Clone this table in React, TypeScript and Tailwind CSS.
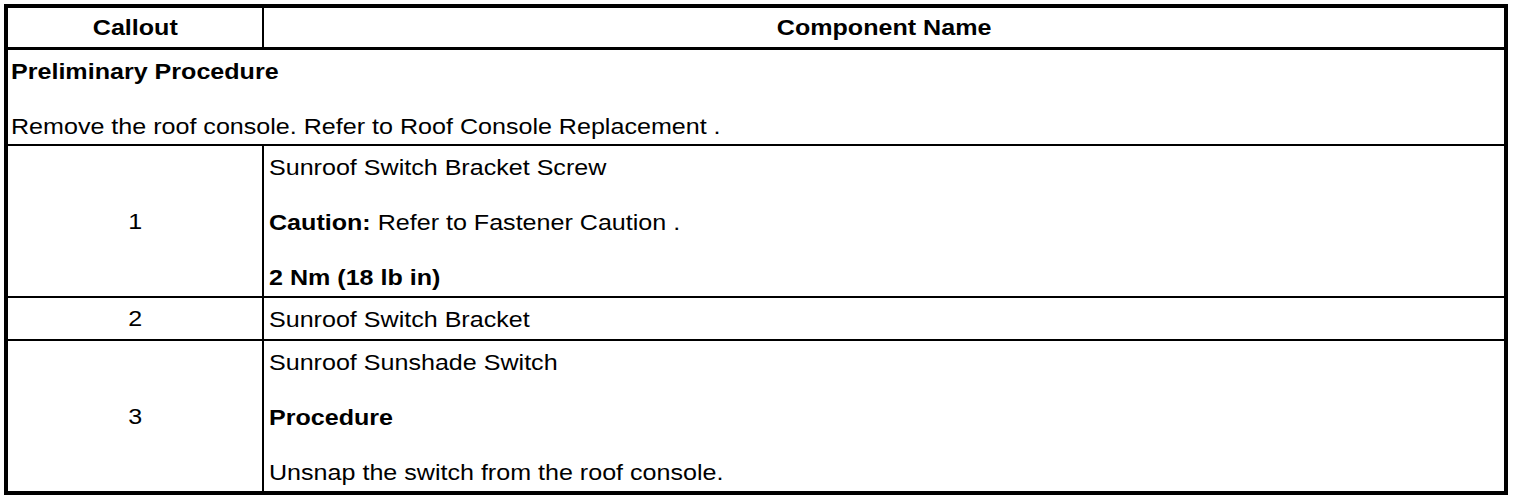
const font = "font-['Liberation_Sans',Arial,Helvetica,sans-serif]";

function Line({ children, bold }: { children: React.ReactNode; bold?: boolean }) {
  return (
    <div className="h-[24px] leading-[24px] whitespace-nowrap">
      <span className={`inline-block origin-left scale-x-[1.14] ${bold ? "font-bold" : ""}`}>
        {children}
      </span>
    </div>
  );
}

function Num({ children }: { children: React.ReactNode }) {
  return (
    <div className="w-[256px] shrink-0 border-r-2 border-black flex items-center justify-center pt-[1px]">
      <span className="inline-block scale-x-[1.14] leading-[24px]">{children}</span>
    </div>
  );
}

export default function App() {
  return (
    <div className={`p-1 bg-white min-h-[500px] text-black text-[22px] ${font}`}>
      <div className="w-[1504px] border-4 border-black">
        {/* header */}
        <div className="flex h-[42px] border-b-[3px] border-black font-bold">
          <div className="w-[256px] shrink-0 border-r-2 border-black flex items-center justify-center">
            <span className="inline-block scale-x-[1.14]">Callout</span>
          </div>
          <div className="flex-1 flex items-center justify-center">
            <span className="inline-block scale-x-[1.14]">Component Name</span>
          </div>
        </div>

        {/* preliminary */}
        <div className="flex flex-col gap-[31px] pt-[10px] pb-[5px] pl-[3px] border-b-2 border-black">
          <Line bold>Preliminary Procedure</Line>
          <Line>Remove the roof console. Refer to Roof Console Replacement .</Line>
        </div>

        {/* 1 */}
        <div className="flex border-b-2 border-black">
          <Num>1</Num>
          <div className="flex-1 flex flex-col gap-[31px] pt-[10px] pb-[6px] pl-[5px]">
            <Line>Sunroof Switch Bracket Screw</Line>
            <Line>
              <b>Caution:</b> Refer to Fastener Caution .
            </Line>
            <Line bold>2 Nm (18 lb in)</Line>
          </div>
        </div>

        {/* 2 */}
        <div className="flex border-b-2 border-black">
          <Num>2</Num>
          <div className="flex-1 pt-[10px] pb-[7px] pl-[5px]">
            <Line>Sunroof Switch Bracket</Line>
          </div>
        </div>

        {/* 3 */}
        <div className="flex">
          <Num>3</Num>
          <div className="flex-1 flex flex-col gap-[31px] pt-[10px] pb-[6px] pl-[5px]">
            <Line>Sunroof Sunshade Switch</Line>
            <Line bold>Procedure</Line>
            <Line>Unsnap the switch from the roof console.</Line>
          </div>
        </div>
      </div>
    </div>
  );
}
